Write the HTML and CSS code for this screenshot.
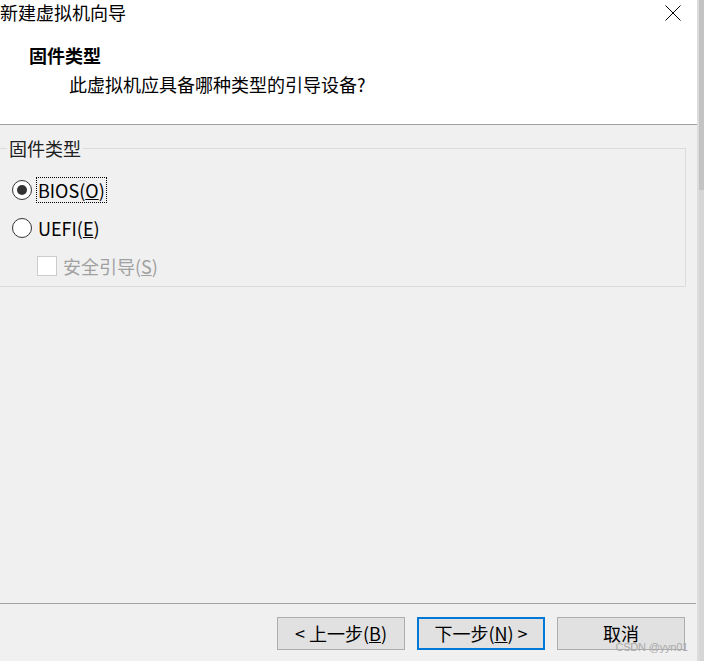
FILE: index.html
```html
<!DOCTYPE html>
<html lang="zh-CN">
<head>
<meta charset="utf-8">
<title>新建虚拟机向导</title>
<link rel="stylesheet" href="styles.css">
</head>
<body>
<div class="window">
  <div class="dialog">
    <header class="header">
      <div class="titlebar">
        <span class="title">新建虚拟机向导</span>
        <svg class="close" width="16" height="16" viewBox="0 0 16 16"><path d="M0.5 0.5 L15.5 15.5 M15.5 0.5 L0.5 15.5" stroke="#000" stroke-width="1" fill="none"/></svg>
      </div>
      <div class="heading">固件类型</div>
      <div class="subheading">此虚拟机应具备哪种类型的引导设备?</div>
    </header>
    <main class="main">
      <fieldset class="group">
        <legend class="legend">固件类型</legend>
        <div class="options">
          <div class="row">
            <span class="radio checked"></span>
            <span class="label focus">BIOS(<u>O</u>)</span>
          </div>
          <div class="row">
            <span class="radio"></span>
            <span class="label">UEFI(<u>E</u>)</span>
          </div>
          <div class="row sub">
            <span class="checkbox"></span>
            <span class="label disabled">安全引导(<u>S</u>)</span>
          </div>
        </div>
      </fieldset>
    </main>
    <footer class="footer">
      <button class="btn">&lt; 上一步(<u>B</u>)</button>
      <button class="btn default">下一步(<u>N</u>) &gt;</button>
      <button class="btn">取消</button>
      <span class="watermark">CSDN @yyn01</span>
    </footer>
  </div>
  <div class="strip"></div>
</div>
</body>
</html>
```
FILE: styles.css
```css
* { box-sizing: border-box; }
html, body { margin: 0; padding: 0; }
body {
  width: 704px;
  height: 661px;
  overflow: hidden;
  background: #f0f0f0;
  font-family: "Noto Sans CJK SC", "Noto Sans", sans-serif;
  font-size: 18px;
  color: #000;
}
.window {
  display: flex;
  height: 661px;
}
.dialog {
  width: 697px;
  display: flex;
  flex-direction: column;
  position: relative;
}
.strip {
  width: 7px;
  background: linear-gradient(to bottom, #c3c3c3 0, #c3c3c3 190px, #d6d6d6 190px, #d6d6d6 100%);
  border-left: 2px solid #dcdcdc;
}
.header {
  background: #fff;
  height: 125px;
  border-bottom: 1px solid #a0a0a0;
}
.titlebar {
  display: flex;
  justify-content: space-between;
  align-items: flex-start;
  height: 26px;
  padding-top: 1px;
}
.title {
  line-height: 22px;
  display: block;
}
.close {
  margin-top: 4px;
  margin-right: 16px;
}
.heading {
  font-weight: bold;
  margin-left: 29px;
  margin-top: 18px;
  line-height: 22px;
}
.subheading {
  margin-left: 69px;
  margin-top: 7px;
  line-height: 22px;
}
.main {
  flex: 1;
  padding-top: 13px;
}
.group {
  margin: 0 11px 0 -4px;
  padding: 0 0 0 10px;
  border: 1px solid #dcdcdc;
  height: 149px;
}
.legend {
  padding: 0 2px;
  line-height: 20px;
  color: #202020;
}
.options {
  display: flex;
  flex-direction: column;
  padding-top: 13px;
}
.row {
  display: flex;
  align-items: center;
  height: 38px;
}
.radio {
  width: 20px;
  height: 20px;
  border: 1px solid #333;
  border-radius: 50%;
  background: #fff;
  margin-left: 5px;
  display: flex;
  align-items: center;
  justify-content: center;
}
.radio.checked::after {
  content: "";
  width: 10px;
  height: 10px;
  border-radius: 50%;
  background: #333;
}
.label {
  margin-left: 4px;
  line-height: 22px;
  padding: 1px 1px;
  border: 1px solid transparent;
}
.label.focus {
  border: 1px dotted #000;
}
.row.sub .checkbox {
  width: 20px;
  height: 20px;
  border: 1px solid #cccccc;
  background: #fff;
  margin-left: 30px;
}
.label.disabled {
  color: #a0a0a0;
  margin-left: 4px;
}
.footer {
  height: 58px;
  border-top: 1px solid #a0a0a0;
  margin-right: 1px;
  display: flex;
  justify-content: flex-end;
  align-items: flex-start;
  gap: 12px;
  padding: 13px 11px 0 0;
  position: relative;
}
.btn {
  width: 128px;
  height: 33px;
  background: #e1e1e1;
  border: 1px solid #adadad;
  font-family: inherit;
  font-size: 18px;
  line-height: 22px;
  color: #000;
  padding: 0 0 2px 0;
}
.btn.default {
  border: 2px solid #0078d7;
}
.watermark {
  position: absolute;
  right: 8px;
  bottom: 7px;
  font-family: "Liberation Sans", sans-serif;
  font-size: 11px;
  letter-spacing: -0.2px;
  color: #aaaaaa;
  line-height: 13px;
}
```
